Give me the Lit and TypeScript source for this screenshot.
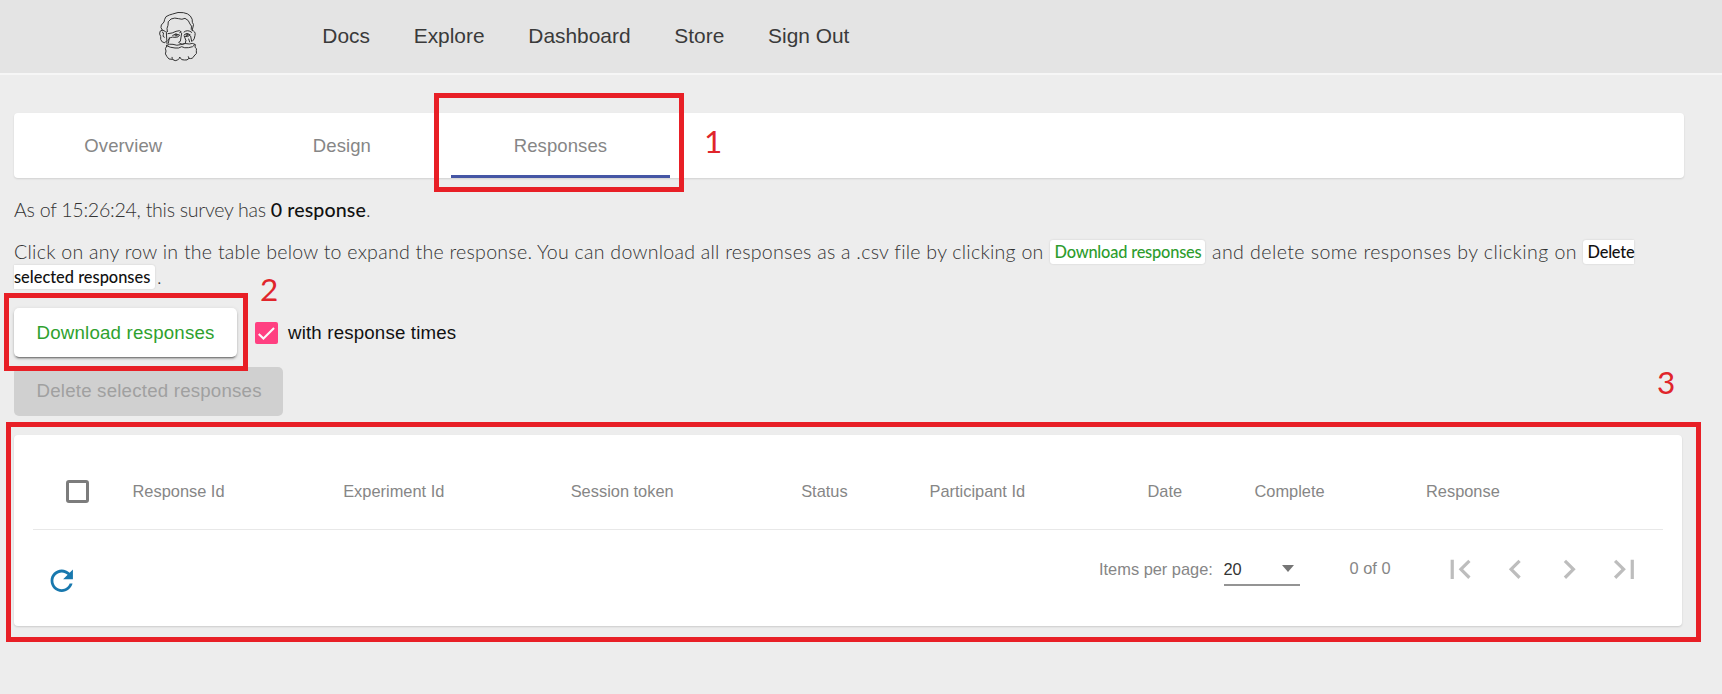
import { LitElement, html, css, svg } from "lit";
import { customElement } from "lit/decorators.js";

const TABS = ["Overview", "Design", "Responses"];
const LINKS = ["Docs", "Explore", "Dashboard", "Store", "Sign Out"];
const COLUMNS = [
  "Response Id",
  "Experiment Id",
  "Session token",
  "Status",
  "Participant Id",
  "Date",
  "Complete",
  "Response",
];
const PAGER = [
  "M18.41 16.59L13.82 12l4.59-4.59L17 6l-6 6 6 6zM6 6h2v12H6z",
  "M15.41 7.41L14 6l-6 6 6 6 1.41-1.41L10.83 12z",
  "M10 6L8.59 7.41 13.17 12l-4.58 4.59L10 18l6-6z",
  "M5.59 7.41L10.18 12l-4.59 4.59L7 18l6-6-6-6zM16 6h2v12h-2z",
];

@customElement("site-header")
export class SiteHeader extends LitElement {
  static styles = css`
    :host {
      display: flex;
      box-sizing: border-box;
      height: 75px;
      padding-left: 140px;
      background: #e4e4e4;
      border-bottom: 2px solid #f6f6f6;
      font-family: "Liberation Sans", Arial, sans-serif;
    }
    .logo {
      width: 80px;
      height: 73px;
      fill: none;
      stroke: #333;
      stroke-width: 3;
      stroke-linecap: round;
      stroke-linejoin: round;
    }
    nav {
      display: flex;
      gap: 43.8px;
      margin-left: 102.3px;
      height: 72px;
      align-items: center;
      font-size: 20.9px;
      color: #3a3a3a;
    }
  `;
  render() {
    return html`
      <svg class="logo" viewBox="0 0 240 219">
        ${svg`
        <path d="M67 91 Q60 82 64 75 L72 66 Q73 58 78 50 Q88 44 98 42 Q114 35 130 38 Q144 40 151 48 Q159 58 157 67 Q163 73 159 81 L157 89"/>
        <path d="M82 95 Q79 84 84 76 Q81 64 93 57 Q104 52 116 56 Q126 60 135 55 Q147 60 150 72 Q157 76 154 88"/>
        <path d="M76 94 Q66 86 60 94 Q57 103 62 109 Q60 120 67 126 Q76 132 79 124"/>
        <path d="M67 96 Q73 98 70 103 Q66 110 73 112 M79 96 L81 132"/>
        <path d="M156 91 Q168 94 165 106 Q164 118 158 123"/>
        <path d="M84 101 Q98 100 108 94 Q121 89 124 96 L119 98 M132 96 Q143 87 155 97"/>
        <path d="M98 106 Q107 98 119 105 Q116 113 105 112 Q98 110 91 113 L84 121 M132 105 Q141 96 151 105 Q143 113 133 109"/>
        <circle cx="108" cy="105" r="3"/><circle cx="141" cy="104" r="3"/>
        <path d="M125 100 L121 124 Q112 126 119 130 Q127 136 136 130 L137 124 M133 109 L138 122"/>
        <path d="M88 113 L85 130 M152 109 L155 124 M146 117 L149 126"/>
        <path d="M79 137 Q89 130 99 133 Q111 138 121 134 Q136 128 148 132 Q157 128 165 133 Q160 142 146 143 Q133 145 125 140 Q116 146 105 144 Q90 143 79 137"/>
        <path d="M80 138 Q73 147 78 153 Q73 162 81 170 Q85 180 97 178 Q106 185 113 180 Q120 174 119 171 Q124 182 133 180 Q142 182 147 175 Q158 178 162 168 Q173 161 169 152 Q172 145 165 142 L166 134"/>
        <path d="M96 172 Q96 176 98 178 M147 175 L145 170"/>
        `}
      </svg>
      <nav>${LINKS.map((l) => html`<span>${l}</span>`)}</nav>
    `;
  }
}

@customElement("response-table")
export class ResponseTable extends LitElement {
  static styles = css`
    :host {
      display: block;
      box-sizing: border-box;
      width: 1668px;
      height: 191px;
      padding: 0 19px;
      background: #fff;
      border-radius: 4px;
      box-shadow: 0 1px 2px rgba(0, 0, 0, 0.14);
      font: 16.4px "Liberation Sans", Arial, sans-serif;
      color: #868686;
    }
    .head {
      display: grid;
      grid-template-columns: 66.5px 210.7px 227.5px 230.5px 128.3px 218px 107px 171.5px 1fr;
      align-items: center;
      height: 95px;
      padding: 19px 0 0 33px;
      box-sizing: border-box;
      border-bottom: 1.5px solid #e8e8e8;
      white-space: nowrap;
    }
    .box {
      width: 22.5px;
      height: 22.5px;
      box-sizing: border-box;
      border: 3px solid #7c7c7c;
      border-radius: 3px;
      margin-top: 1px;
    }
    .foot {
      display: flex;
      height: 95px;
      padding-left: 11.5px;
    }
    .refresh {
      width: 33.5px;
      height: 33.5px;
      margin-top: 34px;
      fill: #1878ae;
    }
    .items {
      margin: 29px 0 0 1021px;
      width: 124.5px;
      line-height: 20px;
      white-space: nowrap;
    }
    .select {
      display: flex;
      justify-content: space-between;
      box-sizing: border-box;
      width: 76.5px;
      height: 27px;
      margin-top: 29px;
      line-height: 20px;
      padding-right: 6px;
      border-bottom: 2px solid #949494;
      color: #333;
    }
    .arrow {
      margin-top: 6.5px;
      width: 0;
      height: 0;
      border: 6.5px solid transparent;
      border-top: 7px solid #757575;
      border-bottom: 0;
    }
    .range {
      margin: 28px 0 0 49.5px;
      width: 91.5px;
      line-height: 20px;
    }
    .pages {
      display: flex;
      gap: 16.2px;
      margin-top: 20.5px;
    }
    .page {
      width: 38.5px;
      height: 38.5px;
      flex: none;
      fill: #bdbdbd;
    }
  `;
  render() {
    return html`
      <div class="head">
        <span class="box"></span>
        ${COLUMNS.map((c) => html`<span>${c}</span>`)}
      </div>
      <div class="foot">
        <svg class="refresh" viewBox="0 0 24 24">
          <path d="M17.65 6.35C16.2 4.9 14.21 4 12 4c-4.42 0-7.99 3.58-7.99 8s3.57 8 7.99 8c3.73 0 6.84-2.55 7.73-6h-2.08c-.82 2.33-3.04 4-5.65 4-3.31 0-6-2.69-6-6s2.69-6 6-6c1.66 0 3.14.69 4.22 1.78L13 11h7V4l-2.35 2.35z"/>
        </svg>
        <span class="items">Items per page:</span>
        <div class="select"><span>20</span><span class="arrow"></span></div>
        <span class="range">0 of 0</span>
        <div class="pages">
          ${PAGER.map((d) => html`<svg class="page" viewBox="0 0 24 24"><path d=${d} /></svg>`)}
        </div>
      </div>
    `;
  }
}

@customElement("app-root")
export class AppRoot extends LitElement {
  static styles = css`
    :host {
      display: block;
      position: relative;
      box-sizing: border-box;
      width: 1722px;
      height: 694px;
      overflow: hidden;
      background: #ededed;
      font: 18.7px "Liberation Sans", Arial, sans-serif;
    }
    main {
      padding: 38px 38px 0 14px;
    }
    .tabs {
      display: flex;
      height: 65px;
      background: #fff;
      border-radius: 4px;
      box-shadow: 0 1px 2px rgba(0, 0, 0, 0.12);
      color: #868686;
      font-size: 18.5px;
      letter-spacing: 0.1px;
    }
    .tab {
      width: 218.6px;
      box-sizing: border-box;
      text-align: center;
      line-height: 66px;
    }
    .tab.on {
      border-bottom: 3px solid #4556a5;
    }
    .text {
      margin: 0;
      font: 300 19.6px/25px Lato, sans-serif;
      color: #333;
      white-space: nowrap;
    }
    .status {
      padding-top: 19px;
      letter-spacing: -0.28px;
    }
    .status b {
      font-weight: 500;
      color: #111;
      letter-spacing: 0.1px;
    }
    .help {
      padding-top: 18px;
    }
    .line {
      display: flex;
      height: 24.5px;
      line-height: 23px;
    }
    .chip {
      box-sizing: border-box;
      height: 24px;
      line-height: 23px;
      padding: 0 4.5px;
      background: #fff;
      border-radius: 3px;
      box-shadow: 0 0 2px rgba(0, 0, 0, 0.15);
      font-size: 16.4px;
      font-weight: 500;
      color: #111;
    }
    .green {
      width: 155px;
      letter-spacing: -0.2px;
      color: #2d9c2d;
    }
    .open {
      padding-right: 0;
      border-radius: 3px 0 0 3px;
      letter-spacing: -0.2px;
    }
    .close {
      width: 141px;
      padding-left: 0;
      margin-right: 2px;
      border-radius: 0 3px 3px 0;
    }
    .seg1 {
      width: 1036px;
      letter-spacing: 0.24px;
    }
    .seg2 {
      width: 371px;
      margin-left: 7px;
      letter-spacing: 0.42px;
    }
    .row {
      display: flex;
      align-items: center;
      height: 49px;
      margin-top: 19px;
    }
    .btn {
      box-sizing: border-box;
      width: 223px;
      height: 49px;
      line-height: 49px;
      padding-left: 22.5px;
      background: #fff;
      border-radius: 5px;
      color: #2ea12e;
      letter-spacing: 0.2px;
      box-shadow: 0 3px 1px -2px rgba(0, 0, 0, 0.3), 0 2px 2px rgba(0, 0, 0, 0.2), 0 1px 4px rgba(0, 0, 0, 0.12);
    }
    .btn.off {
      width: 269px;
      margin-top: 10px;
      line-height: 48px;
      background: #d0d0d0;
      color: #a0a0a0;
      box-shadow: none;
    }
    .check {
      width: 22.5px;
      height: 22.5px;
      margin: 1px 10.5px 0 18px;
      background: #ff4081;
      border-radius: 2px;
    }
    .check path {
      fill: none;
      stroke: #fafafa;
      stroke-width: 2.2;
    }
    .label {
      color: #111;
      letter-spacing: 0.17px;
    }
    response-table {
      margin-top: 18.5px;
    }
    .frame {
      position: absolute;
      box-sizing: border-box;
      border: 5px solid #e81f26;
    }
    .num {
      position: absolute;
      font: 31.5px/38px Lato, sans-serif;
      color: #e0252b;
    }
    .f1 { left: 434px; top: 93px; width: 250px; height: 99px; }
    .f2 { left: 4px; top: 293px; width: 244px; height: 78px; }
    .f3 { left: 6px; top: 422px; width: 1695px; height: 220px; }
    .n1 { left: 704px; top: 122px; }
    .n2 { left: 260px; top: 270px; }
    .n3 { left: 1657px; top: 363px; }
  `;
  render() {
    return html`
      <site-header></site-header>
      <main>
        <div class="tabs">
          ${TABS.map((t, i) => html`<div class="tab ${i === 2 ? "on" : ""}">${t}</div>`)}
        </div>
        <p class="text status">As of 15:26:24, this survey has <b>0 response</b>.</p>
        <div class="text help">
          <div class="line">
            <span class="seg1">Click on any row in the table below to expand the response. You can download all responses as a .csv file by clicking on</span>
            <span class="chip green">Download responses</span>
            <span class="seg2">and delete some responses by clicking on</span>
            <span class="chip open">Delete</span>
          </div>
          <div class="line">
            <span class="chip close">selected responses</span>
            <span>.</span>
          </div>
        </div>
        <div class="row">
          <div class="btn">Download responses</div>
          <svg class="check" viewBox="0 0 24 24"><path d="M4 12.7 L9 17.7 L20.3 6.3" /></svg>
          <span class="label">with response times</span>
        </div>
        <div class="btn off">Delete selected responses</div>
        <response-table></response-table>
      </main>
      <div class="frame f1"></div>
      <div class="frame f2"></div>
      <div class="frame f3"></div>
      <span class="num n1">1</span>
      <span class="num n2">2</span>
      <span class="num n3">3</span>
    `;
  }
}
